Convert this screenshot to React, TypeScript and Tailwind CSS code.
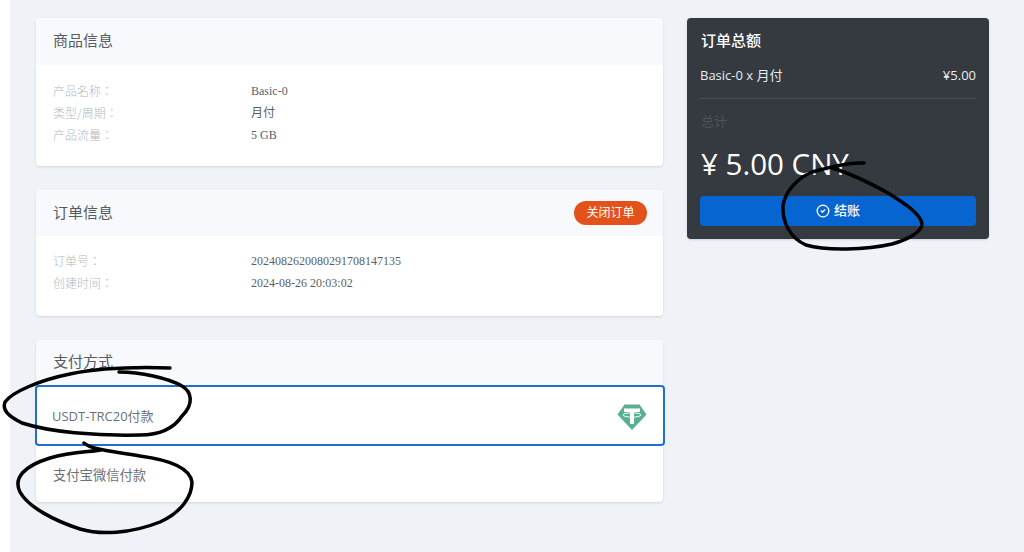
import { CircleCheck } from "lucide-react";

const sans = "font-['Open_Sans','Noto_Sans_CJK_SC',sans-serif]";
const labelFont = "font-['Noto_Sans_CJK_TC',sans-serif]";
const serif = "font-['Liberation_Serif','Noto_Sans_CJK_SC',serif]";

function Row({ label, value }: { label: string; value: string }) {
    return (
        <div className="flex h-[22px] items-center text-xs">
            <div className={`w-[198px] font-light text-[#b4b8be] ${labelFont}`}>{label}</div>
            <div className={`text-[#5a5f66] ${serif}`}>{value}</div>
        </div>
    );
}

function TetherIcon() {
    return (
        <svg width="30" height="28" viewBox="0 0 30 28">
            <path d="M7.5 1.5H22.5L29.5 11.5L15 27L0.5 11.5Z" fill="#5aae91" />
            <path d="M7 5.5H23V9H17V21H13V9H7Z" fill="#fff" />
            <ellipse cx="15" cy="12" rx="9" ry="2.2" fill="none" stroke="#fff" strokeWidth="1" />
        </svg>
    );
}

// the hand drawn circles on top of the screenshot
function Scribbles() {
    return (
        <svg className="absolute left-0 top-0 pointer-events-none" width="1024" height="552" viewBox="0 0 1024 552" fill="none">
            <g stroke="#000" strokeWidth="3.5" strokeLinecap="round" strokeLinejoin="round">
                <path d="M864 163C850 162 826 168 812 172C798 178 786 190 783 205C782 222 790 238 806 245C826 251 866 250 892 244C910 239 922 231 922 224C921 214 904 203 888 193C868 182 846 172 832 168" />
                <path d="M170 368C140 367 100 368 70 374C40 380 12 392 5 402C2 410 8 416 22 423C50 432 95 436 140 435C160 435 174 428 182 416C194 404 192 392 182 386C168 378 140 372 119 372" />
                <path d="M84 443C92 450 112 451 140 456C170 460 190 468 192 482C192 496 182 512 160 522C130 534 100 535 80 529C55 521 28 507 20 492C13 478 24 466 50 458C70 452 90 452 101 450" />
            </g>
        </svg>
    );
}

export default function App() {
    return (
        <div className={`relative flex h-[552px] w-[1024px] overflow-hidden bg-white ${sans}`}>
            <div className="w-[10px] shrink-0" />
            <div className="flex flex-1 items-start gap-6 bg-[#eff2f7] pl-[26px] pt-[18px]">
                {/* left column */}
                <div className="flex w-[627px] flex-col gap-6">
                    <div className="h-[148px] rounded bg-white shadow-sm">
                        <div className="flex h-[47px] items-center rounded-t bg-[#f8f9fc] px-[17px] pb-[2px] text-[15px] text-[#555b63]">商品信息</div>
                        <div className="px-[17px] pt-[15px]">
                            <Row label="产品名称：" value="Basic-0" />
                            <Row label="类型/周期：" value="月付" />
                            <Row label="产品流量：" value="5 GB" />
                        </div>
                    </div>

                    <div className="h-[126px] rounded bg-white shadow-sm">
                        <div className="flex h-[46px] items-center justify-between rounded-t bg-[#f8f9fc] pb-[1px] pl-[17px] pr-[16px] text-[15px] text-[#555b63]">
                            <span>订单信息</span>
                            <span className="flex h-6 w-[73px] items-center justify-center rounded-full bg-[#e4521b] text-xs text-white">关闭订单</span>
                        </div>
                        <div className="px-[17px] pt-[14px]">
                            <Row label="订单号：" value="2024082620080291708147135" />
                            <Row label="创建时间：" value="2024-08-26 20:03:02" />
                        </div>
                    </div>

                    <div className="h-[162px] rounded bg-white shadow-sm">
                        <div className="flex h-[44px] items-center rounded-t bg-[#f8f9fc] px-[17px] pb-[2px] text-[15px] text-[#555b63]">支付方式</div>
                        <div className="ml-[-1px] mr-[-2px] mt-px flex h-[61px] items-center justify-between rounded border-2 border-[#1f6fd0] bg-white pl-[15px] pr-[16px] pt-[2px] text-[13px] text-[#6a7078]">
                            <span>USDT-TRC20付款</span>
                            <TetherIcon />
                        </div>
                        <div className="flex h-[60px] items-center px-[17px] text-[13.3px] text-[#6a7078]">支付宝微信付款</div>
                    </div>
                </div>

                {/* order summary */}
                <div className="flex h-[221px] w-[302px] flex-col rounded bg-[#343a40] px-[13px] text-white shadow-sm">
                    <div className="pl-px pt-[13px] text-[15px] font-medium leading-[18px]">订单总额</div>
                    <div className="mt-[17px] flex items-center justify-between text-[13px] leading-[18px] text-[#e9ecef]">
                        <span>Basic-0 x 月付</span>
                        <span>¥5.00</span>
                    </div>
                    <div className="mt-[14px] h-px bg-[#4b5056]" />
                    <div className="mt-[13px] pl-px text-[13px] leading-[18px] text-[#4f555b]">总计</div>
                    <div className="mt-[14px] pl-px text-[29.5px] font-medium leading-[40px]">¥ 5.00 CNY</div>
                    <div className="mt-[12px] flex h-[30px] items-center justify-center gap-1 rounded-sm bg-[#0665d0] text-[13px] font-medium">
                        <CircleCheck size={14} strokeWidth={2.25} />
                        <span>结账</span>
                    </div>
                </div>
            </div>
            <Scribbles />
        </div>
    );
}
